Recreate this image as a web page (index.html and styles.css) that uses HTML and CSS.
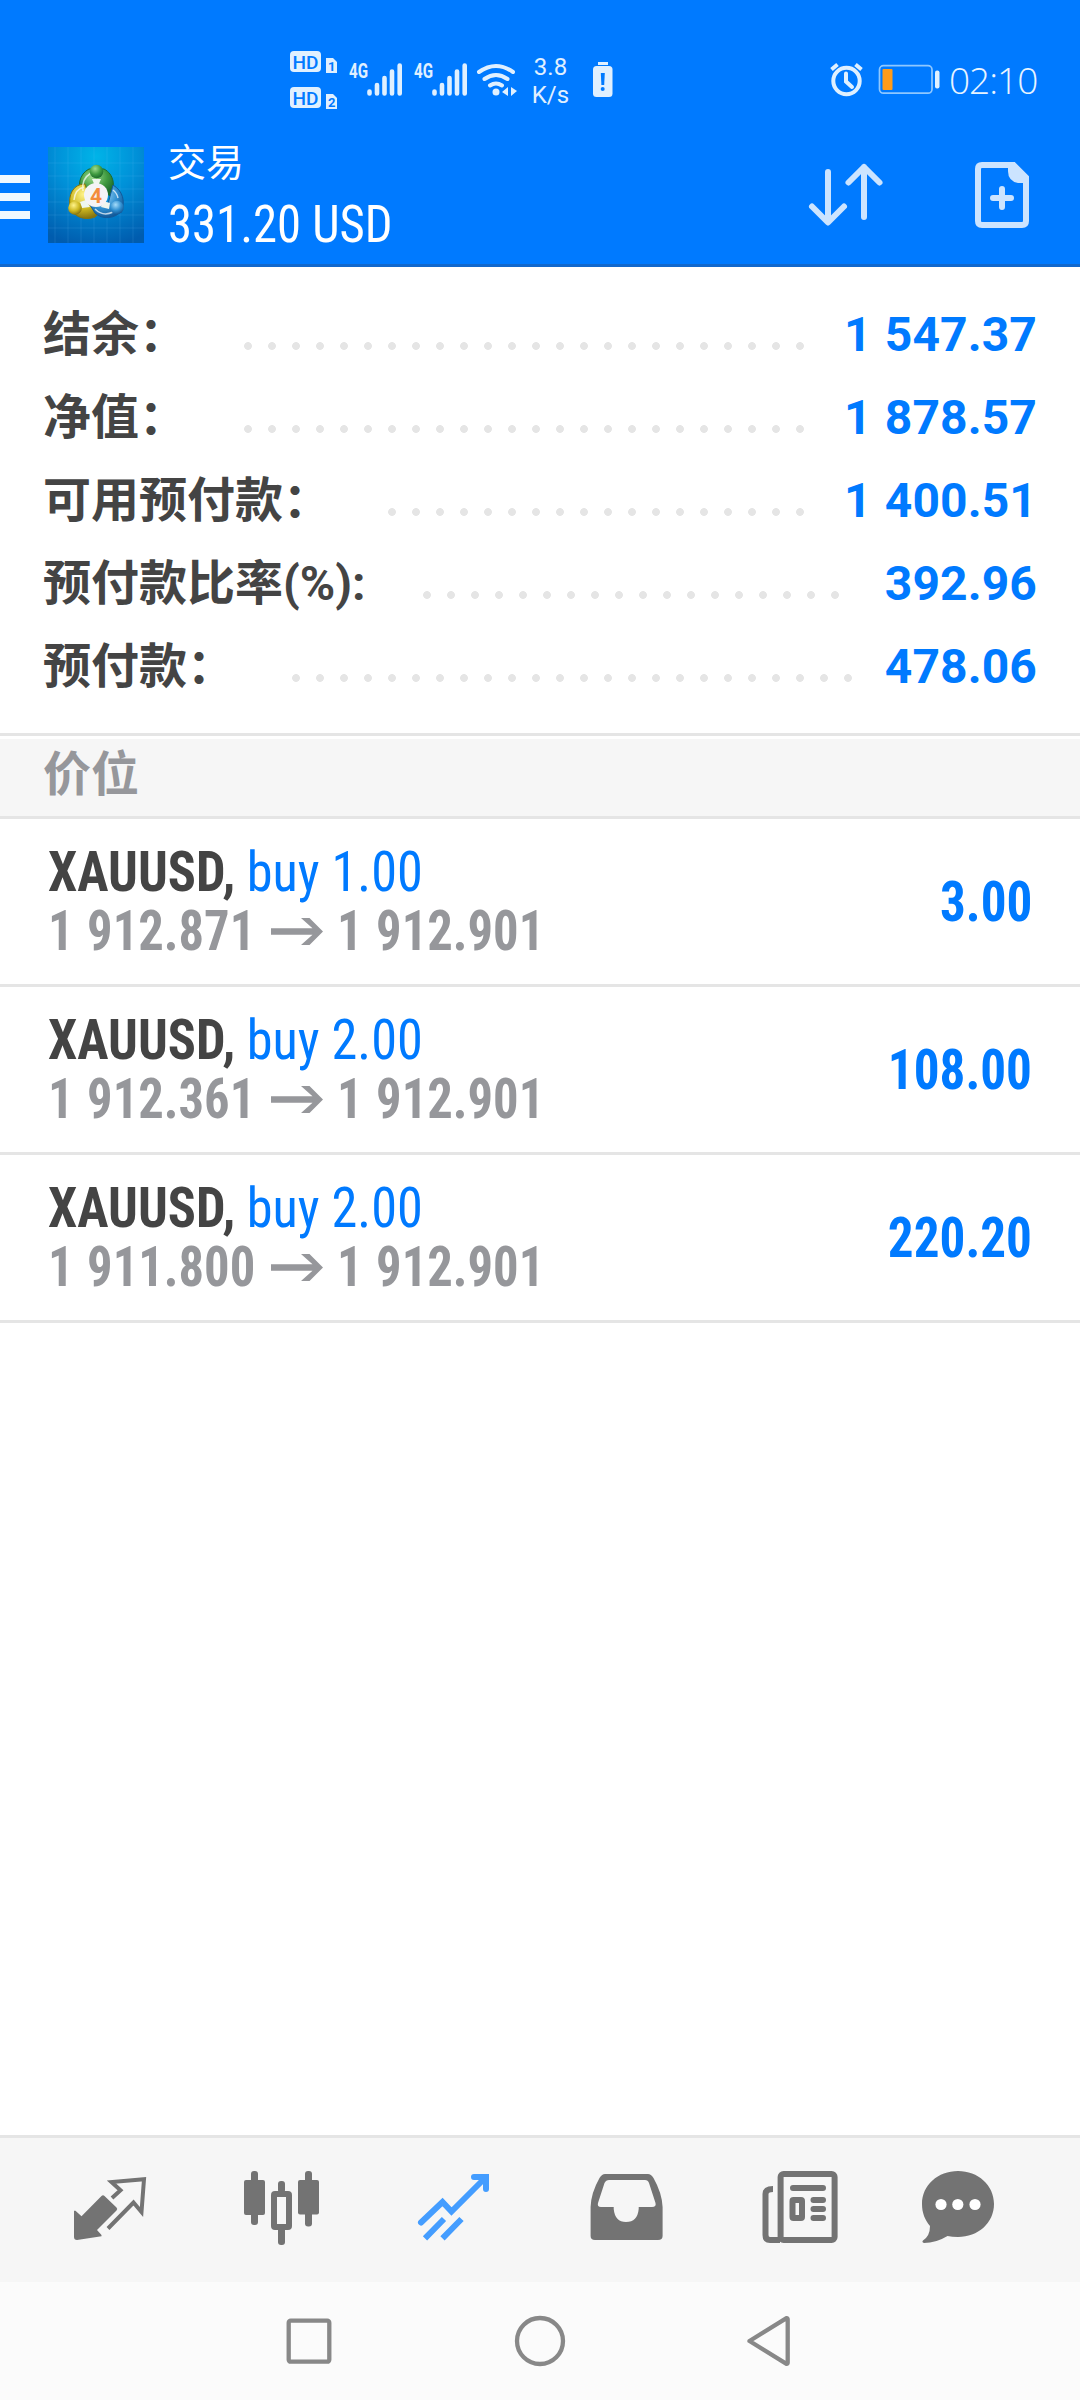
FILE: index.html
```html
<!DOCTYPE html>
<html lang="zh-CN">
<head>
<meta charset="utf-8">
<title>交易</title>
<link rel="stylesheet" href="styles.css">
</head>
<body>
<header class="top">
  <div class="status">
    <svg class="status-left" viewBox="280 40 240 80" width="240" height="80">
      <g fill="#e0f0ff">
        <rect x="290" y="51" width="31" height="21" rx="4"/>
        <path d="M326 58h7l4 4v11h-11z"/>
        <rect x="290" y="87" width="31" height="21" rx="4"/>
        <path d="M326 94h7l4 4v11h-11z"/>
      </g>
      <g class="hd" fill="#007aff">
        <text x="292.500" y="68.500" textLength="26" lengthAdjust="spacingAndGlyphs">HD</text>
        <text x="292.500" y="104.500" textLength="26" lengthAdjust="spacingAndGlyphs">HD</text>
      </g>
      <g class="sim" fill="#007aff">
        <text x="328" y="70.500">1</text>
        <text x="328" y="106.500">2</text>
      </g>
      <g class="net" fill="#e0f0ff">
        <text x="349" y="78" textLength="19" lengthAdjust="spacingAndGlyphs">4G</text>
        <text x="414" y="78" textLength="19" lengthAdjust="spacingAndGlyphs">4G</text>
      </g>
      <g stroke="#e0f0ff" stroke-width="4.600" stroke-linecap="round">
        <path d="M369.500 91.500v2M377 85v8.500M384.500 78v15.500M392 71.500v22M399.700 65.500v28"/>
        <path d="M434.500 91.500v2M442 85v8.500M449.500 78v15.500M457 71.500v22M464.700 65.500v28"/>
      </g>
      <g fill="none" stroke="#e0f0ff" stroke-width="4" stroke-linecap="round">
        <path d="M479 72q17-12 34 0M484.500 79q11.500-8 23 0M490 85.500q6-4 12 0"/>
      </g>
      <g fill="#e0f0ff">
        <circle cx="496" cy="92" r="3.500"/>
        <path d="M508 87v9l-6-4zM511 87l6 4-6 5z"/>
      </g>
    </svg>
    <div class="speed"><span>3.8</span><span>K/s</span></div>
    <svg class="status-warn" viewBox="592 60 22 40" width="22" height="40">
      <rect x="598" y="62" width="10" height="3" fill="#e0f0ff"/>
      <rect x="593" y="66" width="19.500" height="31" rx="3.500" fill="#e0f0ff"/>
      <path d="M600.800 73h4l-.6 12h-2.800z" fill="#007aff"/>
      <circle cx="602.700" cy="89" r="2" fill="#007aff"/>
    </svg>
    <svg class="status-right" viewBox="826 56 118 48" width="118" height="48">
      <g fill="none" stroke="#dff0ff" stroke-width="4">
        <circle cx="846.500" cy="81" r="13.200"/>
        <path d="M846 73.500v8l6 5.500" stroke-linecap="round"/>
        <path d="M831.500 69.500l6-5M861.500 69.500l-6-5"/>
      </g>
      <rect x="879.500" y="65.700" width="52.500" height="27.500" rx="4" fill="none" stroke="#8fc8ff" stroke-width="1.700"/>
      <rect x="882.500" y="69" width="10" height="21" rx="1" fill="#ff9b1a"/>
      <rect x="935" y="70.500" width="4.500" height="18" rx="2" fill="#e0f0ff"/>
    </svg>
    <span class="clock">02:10</span>
  </div>
  <div class="appbar">
    <div class="menu"><i></i><i></i><i></i></div>
    <svg class="logo" viewBox="0 0 96 96" width="96" height="96">
      <defs>
        <radialGradient id="sky" cx=".5" cy=".1" r=".95"><stop offset="0" stop-color="#00b4e8"/><stop offset=".45" stop-color="#0090d8"/><stop offset="1" stop-color="#005cae"/></radialGradient>
        <radialGradient id="gr" cx=".4" cy=".3" r=".7"><stop offset="0" stop-color="#9fdc8f"/><stop offset=".6" stop-color="#3f9a40"/><stop offset="1" stop-color="#1d6b2c"/></radialGradient>
        <radialGradient id="ye" cx=".4" cy=".3" r=".7"><stop offset="0" stop-color="#fff38a"/><stop offset=".6" stop-color="#cdb820"/><stop offset="1" stop-color="#857410"/></radialGradient>
        <radialGradient id="bl" cx=".4" cy=".3" r=".7"><stop offset="0" stop-color="#a5dcfa"/><stop offset=".6" stop-color="#2f8fd0"/><stop offset="1" stop-color="#135a9a"/></radialGradient>
      </defs>
      <rect width="96" height="96" fill="url(#sky)"/>
      <path d="M7 0v96M20 0v96M33 0v96M46 0v96M59 0v96M72 0v96M85 0v96M0 16h96M0 29h96M0 42h96M0 55h96M0 68h96M0 81h96" stroke="#6fd0ff" stroke-opacity=".14" fill="none"/>
      <path d="M41 22C31 27 29 40 34 49L48 38L62 49C68 40 66 27 56 22Z" fill="url(#gr)" stroke="#1d6b2c"/>
      <path d="M37 37C25 37 20 48 22 60C26 70 36 74 47 70L56 62L42 55Z" fill="url(#ye)" stroke="#857410"/>
      <path d="M65 38C75 44 77 54 74 63C68 72 54 73 47 66L42 58L60 57Z" fill="url(#bl)" stroke="#135a9a"/>
      <path d="M35 44q-2-12 8-18M26 53q1-11 10-13M47 62q8 8 18 3M70 51q-1-5-5-8" fill="none" stroke="#fff" stroke-opacity=".7" stroke-width="1.500"/>
      <path d="M44 32h9l-3 7h-3zM32 55l6-2 4 7-8 1zM55 54l7 2-1 6-8-2z" fill="#eef6ee"/>
      <circle cx="48.500" cy="24.500" r="6.800" fill="url(#gr)"/>
      <circle cx="27" cy="61" r="6.800" fill="url(#ye)"/>
      <circle cx="69" cy="60.500" r="6.800" fill="url(#bl)"/>
      <circle cx="48" cy="48" r="12" fill="#f4f3f6"/>
      <text class="four" x="48" y="55.500" text-anchor="middle" fill="#f38b3c">4</text>
    </svg>
    <div class="titles"><span class="title">交易</span><span class="sum cond">331.20 USD</span></div>
    <svg class="actions" viewBox="800 150 280 90" width="280" height="90" fill="none" stroke="#cce4ff" stroke-width="6">
      <path d="M828 172v50M812 206.500l16 16 16-16M864 217v-50M848.500 182.500l15.500-15.500 15.500 15.500" stroke-linecap="round" stroke-linejoin="round"/>
      <path d="M982 165H1013.500L1026 177.500V221Q1026 225 1022 225H982Q978 225 978 221V169Q978 165 982 165Z"/>
      <path d="M1008 164h7l12 12v7h-9q-10-2-10-12z" fill="#cce4ff" stroke="none"/>
      <path d="M1002 189v18M993 198h18" stroke-linecap="round"/>
    </svg>
  </div>
</header>

<section class="summary">
  <div class="row"><span class="label l2">结余：</span><i class="dots" style="width:576px"></i><span class="value">1 547.37</span></div>
  <div class="row"><span class="label l2">净值：</span><i class="dots" style="width:576px"></i><span class="value">1 878.57</span></div>
  <div class="row"><span class="label l5">可用预付款：</span><i class="dots" style="width:432px"></i><span class="value">1 400.51</span></div>
  <div class="row"><span class="label l7">预付款比率(%):</span><i class="dots" style="width:432px"></i><span class="value">392.96</span></div>
  <div class="row"><span class="label l3">预付款：</span><i class="dots" style="width:576px"></i><span class="value">478.06</span></div>
</section>

<h2 class="section">价位</h2>

<main class="trades">
  <article class="trade">
    <div class="info">
      <div class="line order"><b class="cond">XAUUSD,</b><span class="cond side">buy 1.00</span></div>
      <div class="line price"><b class="cond">1 912.871</b><svg class="arrow" viewBox="0 0 52 28" width="52" height="28"><path d="M0 10.300h41.500L30 0h8.500L52 13.500 38.500 27H30l11.500-10.300H0z"/></svg><b class="cond">1 912.901</b></div>
    </div>
    <b class="cond profit">3.00</b>
  </article>
  <article class="trade">
    <div class="info">
      <div class="line order"><b class="cond">XAUUSD,</b><span class="cond side">buy 2.00</span></div>
      <div class="line price"><b class="cond">1 912.361</b><svg class="arrow" viewBox="0 0 52 28" width="52" height="28"><path d="M0 10.300h41.500L30 0h8.500L52 13.500 38.500 27H30l11.500-10.300H0z"/></svg><b class="cond">1 912.901</b></div>
    </div>
    <b class="cond profit">108.00</b>
  </article>
  <article class="trade">
    <div class="info">
      <div class="line order"><b class="cond">XAUUSD,</b><span class="cond side">buy 2.00</span></div>
      <div class="line price"><b class="cond">1 911.800</b><svg class="arrow" viewBox="0 0 52 28" width="52" height="28"><path d="M0 10.300h41.500L30 0h8.500L52 13.500 38.500 27H30l11.500-10.300H0z"/></svg><b class="cond">1 912.901</b></div>
    </div>
    <b class="cond profit">220.20</b>
  </article>
</main>

<nav class="tabs">
  <svg viewBox="24 2138 172 144">
    <path d="M74 2210.700h1.500l6 5.600L101.500 2196q1.500-1.500 3 0L116.500 2207.500q1.500 1.500 0 3L97 2230l4.500 5v1.200L77 2240q-3 0-3-3z"/>
    <path d="M112 2198L120.500 2190.300 111.500 2182 144 2179.300 141.500 2212 133.500 2202.500 108 2228.500" fill="none" stroke="#737373" stroke-width="4"/>
  </svg>
  <svg viewBox="196 2138 172 144">
    <rect x="251" y="2171" width="7" height="54" rx="3"/><rect x="244" y="2180" width="21" height="35" rx="2"/>
    <rect x="305" y="2171" width="7" height="55.500" rx="3"/><rect x="298" y="2180" width="21" height="34.500" rx="2"/>
    <rect x="278" y="2181" width="7" height="12" rx="3"/><rect x="278" y="2227" width="7" height="18" rx="3"/>
    <rect x="274" y="2194" width="15" height="33" rx="1" fill="none" stroke="#737373" stroke-width="6"/>
  </svg>
  <svg viewBox="368 2138 172 144">
    <g fill="none" stroke="#449dff" stroke-width="6">
      <path d="M421 2222.500L442.500 2202l9 9.500L485 2178M474 2177h12v12" stroke-linecap="round"/>
      <path d="M425 2238.300L444 2219M442.500 2238.300L461.500 2219"/>
    </g>
  </svg>
  <svg viewBox="540 2138 172 144">
    <path fill-rule="evenodd" d="M605 2174H648Q651 2174 653.500 2178Q662 2193 662.600 2207V2236Q662.600 2240 658 2240H595Q590.600 2240 590.600 2236V2207Q591 2193 599.500 2178Q602 2174 605 2174ZM609 2180Q606 2180 604.500 2183L598 2203Q597 2207 601 2207H613.700V2209Q615 2222 626 2222Q637.500 2222 638.700 2209V2207H652Q656.500 2207 655.500 2203L649 2183Q648 2180 645 2180Z"/>
  </svg>
  <svg viewBox="712 2138 172 144">
    <g fill="none" stroke="#737373" stroke-width="6">
      <rect x="780.600" y="2174" width="54" height="66" rx="3"/>
      <path d="M773 2189Q765.500 2189 765.500 2194V2235Q765.500 2240 770 2240H780"/>
      <rect x="792.500" y="2200" width="9.500" height="18" rx="1"/>
      <path d="M793 2188h30M813.500 2200h9.500M813.500 2209h9.500M813.500 2218h9.500" stroke-linecap="round"/>
    </g>
  </svg>
  <svg viewBox="884 2138 172 144">
    <path d="M930 2226C925 2220 922 2213 922 2204C922 2185 938 2171 958 2171S994 2185 994 2204 978 2237 958 2237Q952 2237 947.500 2236Q936 2243 924 2243Q921.500 2242 923 2240.500Q930 2236 930 2226Z"/>
    <circle cx="941" cy="2204.500" r="5.600" fill="#fff"/><circle cx="957.800" cy="2204.500" r="5.600" fill="#fff"/><circle cx="975" cy="2204.500" r="5.600" fill="#fff"/>
  </svg>
</nav>
<footer class="sysnav">
  <svg viewBox="0 2282 1080 118" width="1080" height="118" fill="none" stroke="#888" stroke-width="4.300" stroke-linejoin="round">
    <rect x="288.700" y="2320.700" width="40.600" height="41" rx="2"/>
    <circle cx="540" cy="2341" r="23"/>
    <path d="M749.500 2341L786.500 2318.200Q787.700 2318 787.700 2319.500V2362.500Q787.700 2364 786.500 2363.800Z"/>
  </svg>
</footer>
</body>
</html>
```
FILE: styles.css
```css
* { box-sizing: border-box; }
body {
  margin: 0;
  width: 1080px;
  height: 2400px;
  display: flex;
  flex-direction: column;
  background: #fff;
  font-family: Roboto, "Noto Sans CJK SC", sans-serif;
  overflow: hidden;
}
svg { display: block; flex: none; }

.cond { font-family: "Roboto Condensed", Roboto, sans-serif; font-stretch: 75%; white-space: pre; }

.top { height: 267px; background: #007aff; border-bottom: 3px solid #1268cc; color: #fff; }
.status { height: 120px; padding: 40px 0 0 280px; display: flex; align-items: flex-start; }
.hd { font: 500 19px Roboto, sans-serif; }
.sim { font: 700 13px Roboto, sans-serif; }
.net { font: 700 20px Roboto, sans-serif; }
.speed { width: 61px; margin-right: 11px; display: flex; flex-direction: column; align-items: center; padding-top: 13px; font-size: 24px; line-height: 28px; color: #e0f0ff; }
.status-warn { margin-top: 20px; }
.status-right { margin: 16px 0 0 212px; }
.clock { margin: 16px 0 0 5px; font: 300 37px/48px "Open Sans", sans-serif; letter-spacing: -1px; color: #e8f4ff; }

.appbar { height: 144px; display: flex; align-items: flex-start; }
.menu { width: 48px; padding-top: 55px; display: flex; flex-direction: column; gap: 10px; }
.menu i { width: 30px; height: 8px; background: #f0f8ff; }
.logo { margin-top: 27px; }
.four { font: 700 21px Roboto, sans-serif; }
.titles { width: 656px; padding: 18px 0 0 24px; display: flex; flex-direction: column; }
.title { font-size: 38px; line-height: 50px; }
.sum { font-size: 51px; line-height: 73px; transform: scaleX(.955); transform-origin: left; }
.actions { margin-top: 30px; }

.summary { height: 469px; padding: 26px 43px 0; border-bottom: 3px solid #e5e5e5; color: #444; }
.row { height: 83px; display: flex; align-items: baseline; font-size: 48px; font-weight: 700; line-height: 83px; }
.label { flex: none; white-space: nowrap; }
.l2 { width: 193px; }
.l3 { width: 241px; }
.l5 { width: 337px; }
.l7 { width: 372px; }
.dots { flex: none; height: 9px; background: radial-gradient(circle at 12px 4px, #e5e5e5 3.500px, transparent 4.300px) 0 0 / 24px 9px repeat-x; }
.value { margin-left: auto; color: #007aff; white-space: pre; word-spacing: 1px; letter-spacing: .1px; }

.section { margin: 3px 0 0; height: 80px; padding-left: 43px; background: #f6f6f6; border-bottom: 3px solid #e5e5e5; font-size: 48px; font-weight: 700; line-height: 71px; color: #96979b; }

.trades { flex: 1; }
.trade { height: 168px; padding: 24px 48px 0 48px; display: flex; justify-content: space-between; border-bottom: 3px solid #e5e5e5; font-size: 55px; }
.line { height: 59px; line-height: 59px; display: flex; align-items: center; color: #444; }
.order { transform: scaleX(.951); transform-origin: left; }
.side { margin-left: 12px; color: #007aff; }
.price { color: #96979b; }
.price b { transform: scaleX(.92); transform-origin: left; word-spacing: 2px; }
.arrow { margin: 0 14px 0 -2px; fill: #96979b; }
.profit { color: #007aff; line-height: 119px; transform: scaleX(.93); transform-origin: right; }

.tabs { height: 147px; padding-left: 24px; display: flex; background: #f6f6f6; border-top: 3px solid #e5e5e5; }
.tabs svg { width: 172px; height: 144px; fill: #737373; }
.sysnav { height: 118px; background: #fbfbfb; }
```
